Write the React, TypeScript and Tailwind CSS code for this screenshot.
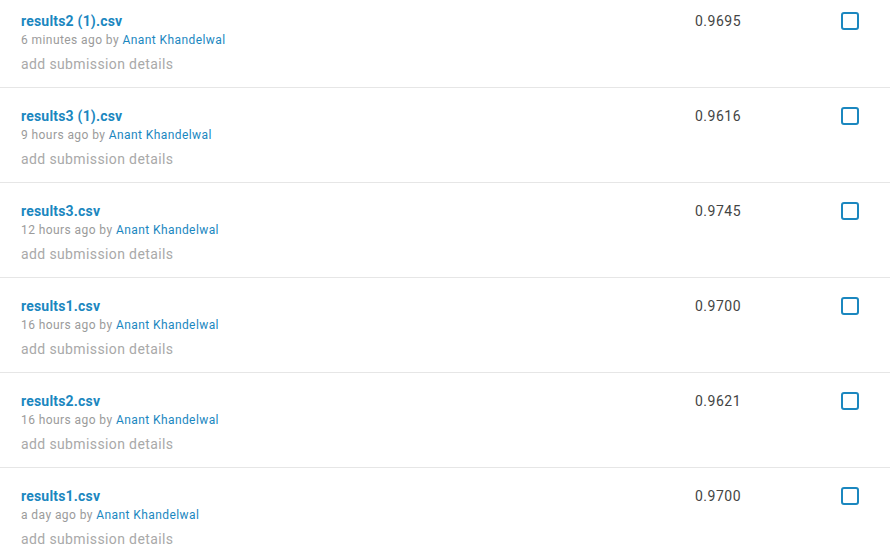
import React from "react";

type Submission = {
  file: string;
  when: string;
  score: string;
};

const submissions: Submission[] = [
  { file: "results2 (1).csv", when: "6 minutes ago", score: "0.9695" },
  { file: "results3 (1).csv", when: "9 hours ago", score: "0.9616" },
  { file: "results3.csv", when: "12 hours ago", score: "0.9745" },
  { file: "results1.csv", when: "16 hours ago", score: "0.9700" },
  { file: "results2.csv", when: "16 hours ago", score: "0.9621" },
  { file: "results1.csv", when: "a day ago", score: "0.9700" },
];

function SubmissionRow({ sub }: { sub: Submission }) {
  return (
    <div className="flex h-[95px] border-b border-[#e6e6e6] pt-[18px]">
      {/* left: file + meta */}
      <div className="w-[695px] pl-[21px]">
        <div className="text-[14px] leading-[20px] font-bold tracking-[0.2px] text-[#1b87bf]">{sub.file}</div>
        <div className="text-[12px] leading-[18px] tracking-[0.42px] text-[#9b9b9b]">
          {sub.when} by <span className="text-[#1b87bf]">Anant Khandelwal</span>
        </div>
        <div className="mt-[6px] text-[14px] leading-[18px] tracking-[0.38px] text-[#a9a9a9]">add submission details</div>
      </div>

      {/* score */}
      <div className="w-[146px] text-[14px] leading-[20px] tracking-[0.5px] text-[#444]">{sub.score}</div>

      {/* checkbox */}
      <div className="pt-[1px]">
        <div className="h-[18px] w-[18px] rounded-[3px] border-2 border-[#1b87bf] bg-white" />
      </div>
    </div>
  );
}

export default function App() {
  return (
    <div className="h-[552px] w-[890px] overflow-hidden bg-white font-['Roboto',sans-serif]">
      <div className="mt-[-7px]">
        {submissions.map((s, i) => (
          <SubmissionRow key={i} sub={s} />
        ))}
      </div>
    </div>
  );
}
